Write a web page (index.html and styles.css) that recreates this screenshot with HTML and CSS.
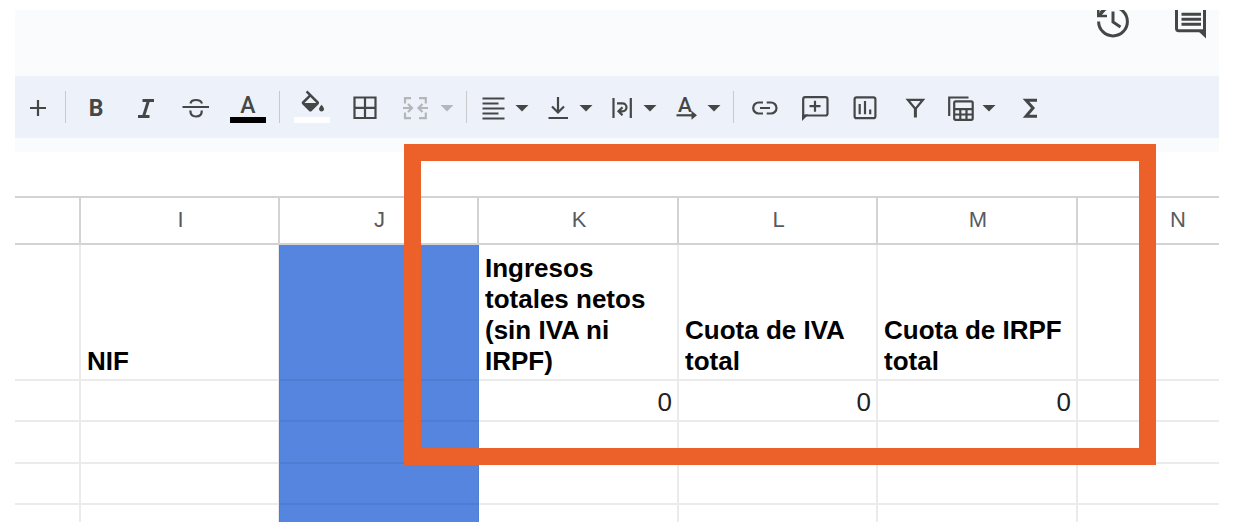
FILE: index.html
```html
<!DOCTYPE html>
<html lang="es">
<head>
<meta charset="utf-8">
<title>Hoja de cálculo</title>
<link rel="stylesheet" href="styles.css">
</head>
<body>
<main class="app">
  <header class="top">
    <div class="title-row">
      <button class="top-btn" aria-label="Historial">
        <svg width="36" height="30" viewBox="0 0 36 30"><path d="M3.600 11.500A14.400 14.400 0 1 0 18 -2.900C12 -2.900 8.500 -0.500 5.500 3M18 1.500V12L25.500 17"/><path class="solid" d="M2 -2H4.500V3L8 -0.500L10 1.500L6.800 4.700H12V7.300H2z"/></svg>
      </button>
      <button class="top-btn" aria-label="Comentarios">
        <svg width="36" height="30" viewBox="0 0 36 30"><path d="M3.500 -4V18.500Q3.500 20.700 5.700 20.700H31.500V-4"/><path class="solid" d="M24 20H33V28.500z"/><path d="M8.500 4.300H28M8.500 9.200H28M8.500 14.200H28"/></svg>
      </button>
    </div>
    <div class="toolbar" role="toolbar" aria-label="Formato">
      <div class="group first">
        <button class="tool narrow" aria-label="Aumentar"><svg width="36" height="36" viewBox="0 0 36 36"><path d="M18 11V27M10 19H26"/></svg></button>
      </div>
      <div class="group">
        <button class="tool" aria-label="Negrita"><svg width="36" height="36" viewBox="0 0 36 36"><text class="letter bold" x="18" y="27">B</text></svg></button>
        <button class="tool" aria-label="Cursiva"><svg width="36" height="36" viewBox="0 0 36 36"><path class="thick" d="M14.500 11.500H26M10 27.500H21.500M20.500 11.500L15.500 27.500"/></svg></button>
        <button class="tool" aria-label="Tachado"><svg width="36" height="36" viewBox="0 0 36 36"><path d="M4.500 18H31M12.500 14.500Q13 11 18 11Q23 11 24 14.500M12.300 21.500Q12.500 27.500 18 27.500Q23.800 27.500 23.800 21.500"/></svg></button>
        <button class="tool wide" aria-label="Color del texto"><svg width="36" height="36" viewBox="0 0 36 36"><text class="letter" x="18" y="24">A</text><rect class="text-color" y="28" width="36" height="6"/></svg></button>
      </div>
      <div class="group">
        <button class="tool wide" aria-label="Color de relleno"><svg width="36" height="36" viewBox="0 0 36 36"><path class="solid" transform="translate(4 1.500) scale(1.240)" d="M16.56 8.94 7.62 0 6.21 1.41l2.38 2.38-5.15 5.15c-.59.59-.59 1.54 0 2.12l5.5 5.5c.29.29.68.44 1.06.44s.77-.15 1.06-.44l5.5-5.5c.59-.58.59-1.53 0-2.12zM5.21 10 10 5.21 14.79 10H5.21zM19 11.5s-2 2.17-2 3.5c0 1.100.9 2 2 2s2-.9 2-2c0-1.33-2-3.500-2-3.500z"/><rect class="fill-color" y="28" width="36" height="6"/></svg></button>
        <button class="tool" aria-label="Bordes"><svg width="36" height="36" viewBox="0 0 36 36"><path d="M8.500 8.500H29.500V29H8.500zM19 8.500V29M8.500 18.800H29.500"/></svg></button>
        <button class="drop merge" aria-label="Combinar celdas" disabled><svg width="36" height="36" viewBox="0 0 36 36"><path d="M14 9.200H8V14.500M8 23.500V29.200H14M22 9.200H28.800V14.500M28.800 23.500V29.200H22M6 19H14.500M11 15l4 4-4 4M31 19H22M25.500 15l-4 4 4 4"/></svg><svg width="20" height="36" viewBox="0 0 20 36"><path class="solid" d="M3.500 16h13l-6.500 6.500z"/></svg></button>
      </div>
      <div class="group aligns">
        <button class="drop" aria-label="Alineación horizontal"><svg width="36" height="36" viewBox="0 0 36 36"><path d="M6.500 9.500H28.500M6.500 14.500H22.500M6.500 19.500H28.500M6.500 24.500H22.500M6.500 29.500H28.500"/></svg><svg width="20" height="36" viewBox="0 0 20 36"><path class="solid" d="M3.500 16h13l-6.500 6.500z"/></svg></button>
        <button class="drop" aria-label="Alineación vertical"><svg width="36" height="36" viewBox="0 0 36 36"><path d="M18 8V23.500M12 17.500l6 6 6-6M8.500 29H28"/></svg><svg width="20" height="36" viewBox="0 0 20 36"><path class="solid" d="M3.500 16h13l-6.500 6.500z"/></svg></button>
        <button class="drop" aria-label="Ajuste de texto"><svg width="36" height="36" viewBox="0 0 36 36"><path d="M9.500 9V29M26.800 9V29M13 14.300H18.500a4 4 0 0 1 0 8H14.500M18.500 18.300l-4 4 4 4"/></svg><svg width="20" height="36" viewBox="0 0 20 36"><path class="solid" d="M3.500 16h13l-6.500 6.500z"/></svg></button>
        <button class="drop" aria-label="Rotación de texto"><svg width="36" height="36" viewBox="0 0 36 36"><text class="letter small" x="17" y="23">A</text><path d="M8.500 26.300H25"/><path class="solid" d="M23.500 21.800L29 26.300L23.500 30.800z"/></svg><svg width="20" height="36" viewBox="0 0 20 36"><path class="solid" d="M3.500 16h13l-6.500 6.500z"/></svg></button>
      </div>
      <div class="group">
        <button class="tool" aria-label="Insertar enlace"><svg width="36" height="36" viewBox="0 0 36 36"><path d="M17 13.500H12.700a5.500 5.500 0 0 0 0 11H17M20.700 13.500H25a5.500 5.500 0 0 1 0 11H20.700M14 19h10"/></svg></button>
        <button class="tool" aria-label="Insertar comentario"><svg width="36" height="36" viewBox="0 0 36 36"><path d="M7.200 29V10.200Q7.200 8.200 9.200 8.200H29.500Q31.500 8.200 31.500 10.200V24.500q0 2-2 2H9M19 11.700V22.700M13.500 17.200H24.500"/><path class="solid" d="M6 25.500H12.500L6 32z"/></svg></button>
        <button class="tool" aria-label="Insertar gráfico"><svg width="36" height="36" viewBox="0 0 36 36"><rect x="8.600" y="8.400" width="20.800" height="20.800" rx="2"/><path d="M13.700 15V25.300M19 12V25.300M24.200 20.500V25.300"/></svg></button>
        <button class="tool" aria-label="Crear filtro"><svg width="36" height="36" viewBox="0 0 36 36"><path d="M11.800 10.800H27L19.400 20z"/><path class="thick" d="M19.400 19.500V28.500"/></svg></button>
        <button class="drop views" aria-label="Vistas de filtro"><svg width="36" height="36" viewBox="0 0 36 36"><path d="M6.200 27V8.500H25.500"/><rect x="11.200" y="12.300" width="18.500" height="18.500" rx="1.500"/><path d="M11.200 20.200H29.700M11.200 25.500H29.700M17.300 20.200V30.800M23.500 20.200V30.800"/></svg><svg width="20" height="36" viewBox="0 0 20 36"><path class="solid" d="M3.500 16h13l-6.500 6.500z"/></svg></button>
        <button class="tool" aria-label="Funciones"><svg width="36" height="36" viewBox="0 0 36 36"><path class="thick" d="M25 11.200H14L21 19L14 27.200H25"/></svg></button>
      </div>
    </div>
  </header>
  <div class="sheet">
    <table>
      <colgroup><col class="c-h"><col class="c-i"><col class="c-j"><col class="c-k"><col class="c-l"><col class="c-m"><col class="c-n"></colgroup>
      <thead>
        <tr><th></th><th>I</th><th>J</th><th>K</th><th>L</th><th>M</th><th>N</th></tr>
      </thead>
      <tbody>
        <tr class="titles"><td></td><td>NIF</td><td class="blue"></td><td>Ingresos totales netos (sin IVA ni IRPF)</td><td>Cuota de IVA total</td><td>Cuota de IRPF total</td><td></td></tr>
        <tr class="values"><td></td><td></td><td class="blue"></td><td>0</td><td>0</td><td>0</td><td></td></tr>
        <tr class="empty"><td></td><td></td><td class="blue"></td><td></td><td></td><td></td><td></td></tr>
        <tr class="values"><td></td><td></td><td class="blue"></td><td></td><td></td><td></td><td></td></tr>
        <tr class="cut"><td></td><td></td><td class="blue"></td><td></td><td></td><td></td><td></td></tr>
      </tbody>
    </table>
  </div>
  <div class="highlight"></div>
</main>
</body>
</html>
```

FILE: styles.css
```css
* { box-sizing: border-box; }

body {
  margin: 0;
  padding: 10px 35px 10px 15px;
  background: #fff;
  font-family: "Liberation Sans", Arial, sans-serif;
}

.app {
  position: relative;
  overflow: hidden;
}

.top {
  padding-bottom: 14px;
  background: #f9fbfd;
}

.title-row {
  display: flex;
  justify-content: flex-end;
  gap: 42px;
  height: 66px;
  padding-right: 10px;
}

button {
  flex: none;
  display: flex;
  align-items: center;
  justify-content: center;
  padding: 0;
  border: 0;
  background: none;
  color: #444746;
}

.top-btn { align-items: flex-start; }

svg {
  flex: none;
  display: block;
  fill: none;
  stroke: currentColor;
  stroke-width: 2.2;
}

.top-btn svg { stroke-width: 3; }
.thick { stroke-width: 3; }
.solid { fill: currentColor; stroke: none; }

.letter {
  fill: currentColor;
  stroke: none;
  font: 500 23px Roboto, sans-serif;
  text-anchor: middle;
}
.letter.bold { font-weight: 700; }
.letter.small { font-size: 21px; }

.text-color { fill: #000; stroke: none; }
.fill-color { fill: #fff; stroke: none; }

.toolbar {
  display: flex;
  align-items: center;
  height: 62px;
  background: #edf2fa;
  overflow: hidden;
}

.group {
  flex: none;
  display: flex;
  align-items: center;
  height: 32px;
  padding: 0 4px 0 5px;
  border-left: 1px solid #c7c9cc;
}
.group.first { padding: 0 4px 0 0; border: 0; }
.group.aligns { gap: 8px; padding: 0 9px; }

.tool { width: 50px; }
.tool.narrow { width: 46px; }
.tool.wide { width: 54px; }
.merge { margin: 0 5px 0 8px; }
.merge:disabled { color: #b4b7ba; gap: 4px; }
.views { margin: 0 6px 0 4px; }

.sheet {
  margin-top: 44px;
  overflow: hidden;
}

table {
  width: 1263px;
  table-layout: fixed;
  border-collapse: separate;
  border-spacing: 0;
}

.c-h { width: 66px; }
.c-i, .c-j, .c-l { width: 199px; }
.c-k, .c-m, .c-n { width: 200px; }

th {
  height: 49px;
  padding: 0 0 2px 2px;
  border: solid #d3d3d3;
  border-width: 2px 2px 2px 0;
  color: #575b5f;
  font-size: 22px;
  font-weight: 400;
}

td {
  padding: 4px 5px 2px 6px;
  border: solid #ebebeb;
  border-width: 0 2px 2px 0;
  color: #000;
  font-size: 26px;
  line-height: 31px;
  vertical-align: bottom;
}

.titles td { height: 136px; font-weight: 700; }
.values td { height: 41px; color: #222; text-align: right; }
.empty td { height: 42px; }
.cut td { height: 17px; padding: 0; border-bottom: 0; }

td.blue {
  background: #5585df;
  border-color: #4f7dd2;
  border-right-width: 1px;
  box-shadow: -1px 0 0 #4f7dd3;
}

.highlight {
  position: absolute;
  top: 134px;
  left: 389px;
  width: 752px;
  height: 321px;
  border: 17px solid #ec6129;
  pointer-events: none;
}
```
